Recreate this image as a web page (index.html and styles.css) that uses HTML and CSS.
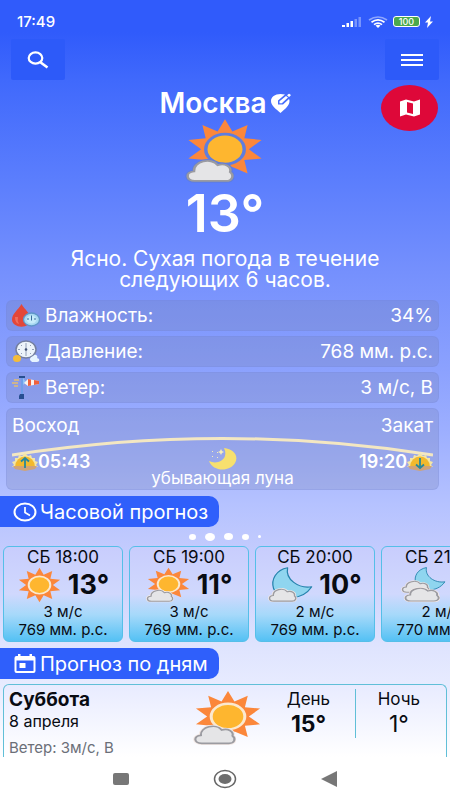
FILE: index.html
```html
<!DOCTYPE html>
<html lang="ru">
<head>
<meta charset="utf-8">
<meta name="viewport" content="width=device-width, initial-scale=1">
<title>Погода — Москва</title>
<link rel="stylesheet" href="styles.css">
</head>
<body>
<svg class="sprite" aria-hidden="true">
  <symbol id="sun" viewBox="-52 -52 104 104" preserveAspectRatio="none">
    <path fill="#fb873b" d="M0-50 9.6-29.5 29.4-40.5 25.1-18.2 47.6-15.5 31 0 47.6 15.5 25.1 18.2 29.4 40.5 9.6 29.5 0 50-9.6 29.5-29.4 40.5-25.1 18.2-47.6 15.5-31 0-47.6-15.5-25.1-18.2-29.4-40.5-9.6-29.5Z"/>
    <circle class="sun-disc" r="25" fill="#feb62f" stroke-width="4.5"/>
  </symbol>
  <symbol id="cloud" viewBox="0 0 60 40" preserveAspectRatio="none">
    <path class="cloud-halo" fill="none" stroke-width="6" d="M12 36C1 36 0 22 11 21C10 5 32-2 40 11C49 7 57 14 55 22C60 27 58 36 50 36Z"/>
    <path fill="#e5e5e7" stroke="#9b9ba1" stroke-width="3" d="M12 36C1 36 0 22 11 21C10 5 32-2 40 11C49 7 57 14 55 22C60 27 58 36 50 36Z"/>
  </symbol>
  <symbol id="sun-cloud" viewBox="-52 -52 104 110" preserveAspectRatio="none">
    <use href="#sun" x="-52" y="-52" width="104" height="104"/>
    <use href="#cloud" x="-52" y="15" width="64" height="42"/>
  </symbol>
  <symbol id="moon" viewBox="0 0 100 90" preserveAspectRatio="none">
    <path fill="#8fd5ef" stroke="#2583ad" stroke-width="3" stroke-linejoin="round" d="M40 2C12 8 0 34 6 58C14 88 72 98 98 54C66 60 34 34 40 2Z"/>
  </symbol>
  <symbol id="moon-cloud" viewBox="0 0 106 92" preserveAspectRatio="none">
    <use href="#moon" x="7" y="0" width="98" height="84"/>
    <use href="#cloud" x="0" y="53" width="68" height="38"/>
  </symbol>
  <symbol id="moon-clouds" viewBox="0 0 106 92" preserveAspectRatio="none">
    <use href="#moon" x="30" y="0" width="75" height="63"/>
    <use href="#cloud" x="0" y="33" width="68" height="35"/>
    <use href="#cloud" x="6" y="50" width="86" height="41"/>
  </symbol>
  <symbol id="horizon" viewBox="0 0 26 18" preserveAspectRatio="none">
    <path fill="#f4e6a4" d="M0 14 2 12 0 9 3 8 3 5 6 5 7 2 10 3 13 0 16 3 19 2 20 5 23 5 23 8 26 9 24 12 26 14Z"/>
    <path fill="#f2b92d" d="M3 14a10 10.500 0 0 1 20 0Z"/>
    <path fill="#cfa379" d="M1 13h24l-2 3-10 2-10-2Z"/>
  </symbol>
</svg>

<div class="app">
  <header class="status">
    <time>17:49</time>
    <div class="status-icons">
      <svg width="21" height="12" viewBox="0 0 21 12" aria-label="Сигнал"><g fill="#fff"><rect x="0" y="9" width="3" height="2"/><rect x="4.500" y="7" width="2.500" height="4"/><rect x="8.500" y="5" width="2.500" height="6"/><g opacity=".35"><rect x="12.500" y="3" width="2.500" height="8"/><rect x="16.500" y="1" width="2.500" height="10"/></g></g></svg>
      <svg width="20" height="12" viewBox="0 0 20 12" fill="none" stroke="#fff" stroke-width="1.700" aria-label="Wi-Fi"><path opacity=".45" d="M1 4Q10-2 19 4"/><path d="M3.500 6.300Q10 1.500 16.500 6.300M6 8.600Q10 5.500 14 8.600"/><path fill="#fff" stroke="none" d="M7.500 9.500Q10 8 12.500 9.500L10 12Z"/></svg>
      <span class="battery">100</span>
      <svg width="8" height="12" viewBox="0 0 8 12" aria-hidden="true"><path fill="#fff" d="M6 0 0 6.500H3L2 12 8 5.500H5Z"/></svg>
    </div>
  </header>

  <nav class="toolbar" aria-label="Меню">
    <button class="tool" type="button" aria-label="Поиск"><svg width="22" height="18" viewBox="0 0 22 18" fill="none" stroke="#fff"><ellipse cx="8.500" cy="7" rx="6.800" ry="5.600" stroke-width="2.200"/><path stroke-width="2.600" d="m13 11 7.500 5.500"/></svg></button>
    <button class="tool" type="button" aria-label="Открыть меню"><svg width="22" height="12" viewBox="0 0 22 12" fill="#fff"><path d="M0 0h22v2H0zM0 5h22v2H0zM0 10h22v2H0z"/></svg></button>
  </nav>

  <section class="hero">
    <button class="map" type="button" aria-label="Карта"><svg width="22" height="18" viewBox="0 0 22 18"><path fill="#fff" fill-rule="evenodd" d="M1 2.500 7 0.500 15 2.500 21 .5V15.500L15 17.500 7 15.500 1 17.500ZM8 3V13.500L14 15V4.500Z"/></svg></button>
    <h1>Москва <svg width="20" height="20" viewBox="0 0 20 20" aria-label="Изменить"><path fill="#fff" d="M14 1.500C6-.5 0 3 0 8C0 12.500 5 16 9.500 20C14 16 18.500 12.500 18.500 8Q18.500 7 18 6L12 11.500H7V7.500Z"/><path fill="#fff" d="M8.500 10.200V8.200L15 3 17 4.500 10.800 10.200ZM16 2.300 17.500 1Q18.300.5 19 1.200L19.600 1.800Q20 2.300 19.500 2.800L18 4Z"/></svg></h1>
    <svg class="hero-icon"><use href="#sun-cloud"/></svg>
    <p class="temp">13°</p>
    <p class="summary">Ясно. Сухая погода в течение следующих 6 часов.</p>
  </section>

  <section class="details">
    <dl class="metrics">
      <div class="metric">
        <dt><svg width="28" height="23" viewBox="0 0 28 23"><path fill="#e34739" d="M9.500 0C6 6 0 10 0 15.500C0 25 19 25 19 15.500C19 10 13 6 9.500 0Z"/><path fill="#f06d5e" d="M3 13q0 6 4 7q-2-3-1-7z"/><ellipse cx="19.500" cy="15.500" rx="8" ry="6.500" fill="#a9d9f2" stroke="#5f96c9" stroke-width="1.300"/><ellipse cx="19.500" cy="15.500" rx="5" ry="4" fill="#c6ebfa"/><path stroke="#386c9c" d="M19.500 11.500v5M15 15h2M22 15h2"/></svg>Влажность:</dt>
        <dd>34%</dd>
      </div>
      <div class="metric">
        <dt><svg width="28" height="23" viewBox="0 0 28 23"><ellipse cx="14" cy="9.500" rx="10" ry="8.500" fill="#edf4fa" stroke="#747f9f" stroke-width="1.500"/><path stroke="#7c8aa6" stroke-width=".8" d="M14 3v13M6 9.500h2M20 9.500h2M9 5l1 1M19 5l-1 1M9 14l1-1M19 14l-1-1"/><circle cx="14" cy="9.500" r="1.300" fill="#425375"/><ellipse cx="5" cy="18.500" rx="4" ry="3.500" fill="#f4bc3a"/><path fill="#e7f4ff" d="M18 20c0-4 3-3 4-5c3-1 4 2 3 3c4 1 2 4 0 4h-5z"/></svg>Давление:</dt>
        <dd>768 мм. р.с.</dd>
      </div>
      <div class="metric">
        <dt><svg width="28" height="23" viewBox="0 0 28 23"><path stroke="#e3bd72" stroke-width="1.500" d="M2 4h5M0 7h6M2 10h4"/><path fill="#274e91" d="M7 0h6v2H7zM8 18h4v5H7v-3z"/><path fill="#6f9ee9" d="M9 2h2v16H9z"/><path fill="#8fc2f7" d="m11 2 3 4-3 3z"/><path fill="#f7f2f0" d="m12 7 4-4 11 2v3l-11 2z"/><path fill="#ee613f" d="m16 3 3 .5v6l-3 .5zM22 4l5 1v3l-5 1z"/></svg>Ветер:</dt>
        <dd>3 м/с, В</dd>
      </div>
    </dl>

    <div class="daylight">
      <span class="start">Восход</span>
      <span class="end">Закат</span>
      <svg class="arc" viewBox="0 0 426 20" preserveAspectRatio="none" aria-hidden="true"><path fill="none" stroke="#f3e7c2" stroke-width="3" d="M0 18Q107 1.500 213 1.500T426 18"/></svg>
      <span class="time rise"><svg width="26" height="18"><use href="#horizon"/><path fill="none" stroke="#28889b" stroke-width="1.800" d="M13 15V5M9 8.500 13 5l4 3.500"/></svg>05:43</span>
      <svg class="moon-phase" width="28" height="24" viewBox="0 0 28 24" aria-hidden="true"><path fill="#f7e06e" d="M15 1C25 2 30 9 26 16C21 25 4 25 0 14C6 17 14 15 16 9Q17 5 15 1Z"/><path fill="#f6edbc" d="M12 2l1 2 2 1-2 1-1 2-1-2-2-1 2-1zM3 4h1v1H3zM8 5h1v1H8zM3 9h1v1H3zM8 10h1v1H8z"/></svg>
      <span class="time set">19:20<svg width="26" height="18"><use href="#horizon"/><path fill="none" stroke="#28889b" stroke-width="1.800" d="M13 5v10M9 11.500l4 3.500 4-3.500"/></svg></span>
      <span class="phase">убывающая луна</span>
    </div>
  </section>

  <section>
    <h2 class="pill"><svg width="24" height="20" viewBox="0 0 24 20" fill="none" stroke="#fff"><ellipse cx="12" cy="10" rx="10.500" ry="8.500" stroke-width="2"/><path stroke-width="1.700" d="M12 5v5.500l5 3"/></svg>Часовой прогноз</h2>
    <div class="dots" aria-hidden="true"><i class="dot"></i><i class="dot big"></i><i class="dot mid"></i><i class="dot"></i><i class="dot small"></i></div>
    <ul class="hours">
      <li class="hour"><span class="when">СБ 18:00</span><span class="now"><svg><use href="#sun"/></svg><b>13°</b></span><span>3 м/с</span><span>769 мм. р.с.</span></li>
      <li class="hour"><span class="when">СБ 19:00</span><span class="now"><svg><use href="#sun-cloud"/></svg><b>11°</b></span><span>3 м/с</span><span>769 мм. р.с.</span></li>
      <li class="hour"><span class="when">СБ 20:00</span><span class="now"><svg><use href="#moon-cloud"/></svg><b>10°</b></span><span>2 м/с</span><span>769 мм. р.с.</span></li>
      <li class="hour"><span class="when">СБ 21:00</span><span class="now"><svg><use href="#moon-clouds"/></svg><b>9°</b></span><span>2 м/с</span><span>770 мм. р.с.</span></li>
    </ul>
  </section>

  <section class="days">
    <h2 class="pill"><svg width="24" height="20" viewBox="0 0 24 20"><path fill="#fff" fill-rule="evenodd" d="M5 0h2.500v2h9V0H19v2h1.500q2 0 2 2v13q0 2-2 2h-17q-2 0-2-2V4q0-2 2-2H5ZM3.500 6.500V17h17V6.500Z"/><path fill="#fff" d="M6.500 9h6v5h-6z"/></svg>Прогноз по дням</h2>
    <article class="day">
      <div class="date"><h3>Суббота</h3><p>8 апреля</p><p class="wind">Ветер: 3м/с, В</p></div>
      <svg class="day-icon"><use href="#sun-cloud"/></svg>
      <div class="part"><span>День</span><b>15°</b></div>
      <div class="part night"><span>Ночь</span><span class="low">1°</span></div>
    </article>
  </section>

  <nav class="system" aria-label="Системная навигация">
    <button type="button" aria-label="Недавние"><svg width="18" height="14"><rect x="1" y="1" width="16" height="12" rx="2" fill="#777"/></svg></button>
    <button type="button" aria-label="Домой"><svg width="24" height="20"><ellipse cx="12" cy="10" rx="10.500" ry="8.500" fill="none" stroke="#666" stroke-width="1.500"/><ellipse cx="12" cy="10" rx="6.500" ry="5" fill="#6d6d6d"/></svg></button>
    <button type="button" aria-label="Назад"><svg width="18" height="16"><path fill="#777" d="M17 0v16L1 8Z"/></svg></button>
  </nav>
</div>
</body>
</html>
```
FILE: styles.css
```css
* { box-sizing: border-box; }

body {
  margin: 0;
  font-family: Inter, Roboto, sans-serif;
  font-size: 19px;
  color: #fff;
}

h1, h2, h3, p, dl, dd, ul { margin: 0; padding: 0; }
button { border: 0; padding: 0; cursor: pointer; }
svg { display: block; flex: none; }
.sprite { display: none; }

.app {
  --sun-ring: #fbe9cf;
  --cloud-ring: #f3e9e6;
  display: flex;
  flex-direction: column;
  min-height: 100vh;
  overflow: hidden;
  background: linear-gradient(#305bfb 4%, #4069fc 10%, #5a7dfd 22%, #7590fd 34%, #8ba1fe 46%, #9dafff 54%, #b5c2ff 63%, #c8cffd 71%, #dfe4fe 81%, #e8ecff 86%, #fff 95%);
}
.sun-disc { stroke: var(--sun-ring); }
.cloud-halo { stroke: var(--cloud-ring); }

.status {
  display: flex;
  justify-content: space-between;
  align-items: center;
  height: 39px;
  padding: 4px 17px 0;
  font-size: 15px;
  font-weight: 500;
}
.status-icons { display: flex; align-items: center; gap: 5px; }
.battery {
  width: 27px;
  border: 1px solid #fff;
  border-radius: 3px;
  background: #4ba84d;
  font-size: 9px;
  line-height: 9px;
  text-align: center;
}

.toolbar { display: flex; justify-content: space-between; padding: 0 11px; }
.tool {
  display: grid;
  place-items: center;
  width: 54px;
  height: 41px;
  border-radius: 2px;
  background: #2d5af9;
}

.hero {
  --sun-ring: #5f7dde;
  --cloud-ring: #5f7dde;
  position: relative;
  display: flex;
  flex-direction: column;
  align-items: center;
  padding: 8px 20px 10px;
  text-align: center;
}
.map {
  position: absolute;
  top: 5px;
  right: 12px;
  display: grid;
  place-items: center;
  width: 57px;
  height: 46px;
  border-radius: 50%;
  background: #de0839;
}
h1 {
  display: flex;
  align-items: center;
  gap: 4px;
  font-size: 28px;
  line-height: 30px;
  font-weight: 600;
}
.hero-icon { width: 80px; height: 66px; }
.temp { font-size: 52px; line-height: 60px; font-weight: 600; }
.summary {
  max-width: 340px;
  padding-top: 4px;
  font-size: 21px;
  line-height: 21px;
}

.details { display: grid; gap: 5px; padding: 0 11px 6px 6px; }
.metrics { display: grid; gap: 5px; }
.metric, .daylight {
  border: 1px solid #6f83d733;
  border-radius: 6px;
  background: #7883b247;
}
.metric {
  display: flex;
  justify-content: space-between;
  align-items: center;
  height: 31px;
  padding: 0 5px;
}
.metric dt { display: flex; align-items: center; gap: 5px; }

.daylight {
  display: grid;
  grid-template-columns: 1fr auto 1fr;
  grid-template-rows: 27px 34px 17px;
  padding: 1px 5px;
}
.start { grid-column: 1; line-height: 31px; }
.end { grid-column: 3; text-align: right; line-height: 31px; }
.arc { grid-area: 2 / 1 / 3 / 4; width: 100%; height: 20px; }
.time {
  grid-row: 2;
  display: flex;
  align-items: center;
  align-self: end;
  font-size: 18px;
  line-height: 18px;
  font-weight: 600;
}
.rise { grid-column: 1; }
.set { grid-column: 3; justify-content: flex-end; }
.moon-phase { grid-area: 2 / 2; place-self: end center; }
.phase {
  grid-area: 3 / 1 / 4 / 4;
  text-align: center;
  font-size: 17px;
  line-height: 14px;
}

.pill {
  display: flex;
  align-items: center;
  gap: 3px;
  width: fit-content;
  height: 31px;
  padding: 0 11px 0 13px;
  border-radius: 0 10px 10px 0;
  background: #2f5ffb;
  font-size: 20px;
  font-weight: 400;
}

.dots { display: flex; justify-content: center; align-items: center; gap: 9px; height: 19px; }
.dot { width: 7px; height: 6px; border-radius: 50%; background: #fff; }
.dot.big { width: 10px; height: 8px; }
.dot.mid { width: 9px; height: 7px; }
.dot.small { width: 3px; height: 3px; }

.hours {
  display: flex;
  gap: 6px;
  padding-left: 3px;
  overflow: hidden;
  list-style: none;
  color: #080b12;
}
.hour {
  display: flex;
  flex: none;
  flex-direction: column;
  align-items: center;
  width: 120px;
  height: 96px;
  border: 1px solid #55bfe8;
  border-radius: 6px;
  background: linear-gradient(#c8cdfd, #d0d8fd 50%, #a6d9fa 72%, #54c1f4);
  font-size: 15px;
  line-height: 18px;
}
.when { font-size: 17px; line-height: 20px; }
.now { display: flex; align-items: center; gap: 6px; height: 36px; }
.now svg { width: 45px; height: 36px; }
.now b { font-size: 27px; font-weight: 700; }

.days { display: flex; flex-direction: column; flex: 1; gap: 5px; padding-top: 6px; }
.day {
  display: grid;
  grid-template-columns: 185fr 74fr 89fr 92fr;
  align-items: start;
  flex: 1;
  margin: 0 3px;
  padding: 4px 0 0 5px;
  border: 1px solid #60bfd8;
  border-bottom: 0;
  border-radius: 6px 6px 0 0;
  background: linear-gradient(#e8ebff, #fff);
  color: #080b12;
}
.date { font-size: 16px; line-height: 20px; }
.date h3 { font-size: 19px; line-height: 22px; font-weight: 700; }
.wind { padding-top: 8px; color: #6b6f78; font-size: 15px; line-height: 18px; }
.day-icon { width: 70px; height: 56px; margin-top: 1px; }
.part {
  display: flex;
  flex-direction: column;
  align-items: center;
  height: 49px;
  padding-right: 4px;
  font-size: 17px;
  line-height: 21px;
}
.part b, .low { font-size: 23px; line-height: 28px; }
.night { border-left: 1px solid #60bfd8; }

.system {
  display: flex;
  justify-content: center;
  gap: 80px;
  height: 43px;
  background: #fff;
}
.system button {
  display: grid;
  place-items: center;
  width: 24px;
  background: none;
}
```
